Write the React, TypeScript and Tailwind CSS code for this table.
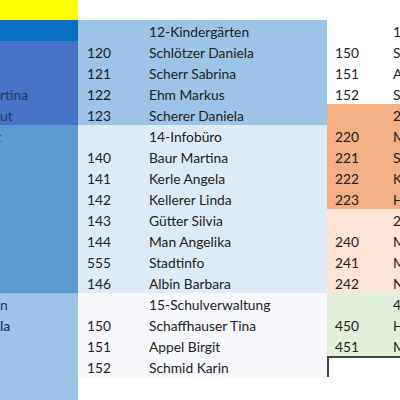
import * as React from "react";

type Row = {
  a?: string;
  aBg: string;
  b?: string;
  c?: string;
  bcBg: string;
  d?: string;
  e?: string;
  deBg: string;
  box?: boolean;
};

const Y = "bg-[#ffff00]";
const BLUE0 = "bg-[#0a6fc0]";
const BLUE1 = "bg-[#4673c6]";
const BLUE2 = "bg-[#5b9bd5]";
const BLUE3 = "bg-[#9dc3e6]";
const BLUE4 = "bg-[#ddebf7]";
const PALE = "bg-[#f6f8fc]";
const W = "bg-white";
const OR = "bg-[#f4b084]";
const PEACH = "bg-[#fce4d6]";
const GREEN = "bg-[#e2efda]";

const rows: Row[] = [
  { aBg: Y, bcBg: W, deBg: W },
  { aBg: BLUE0, c: "12-Kindergärten", bcBg: BLUE3, e: "13-Jugend", deBg: W },
  { aBg: BLUE1, b: "120", c: "Schlötzer Daniela", bcBg: BLUE3, d: "150", e: "Schaffhauser", deBg: W },
  { aBg: BLUE1, b: "121", c: "Scherr Sabrina", bcBg: BLUE3, d: "151", e: "Appel", deBg: W },
  { aBg: BLUE1, a: "rtina", b: "122", c: "Ehm Markus", bcBg: BLUE3, d: "152", e: "Schmid", deBg: W },
  { aBg: BLUE1, a: "ut", b: "123", c: "Scherer Daniela", bcBg: BLUE3, e: "22-Bauamt", deBg: OR },
  { aBg: BLUE2, a: "t", c: "14-Infobüro", bcBg: BLUE4, d: "220", e: "Maier", deBg: OR },
  { aBg: BLUE2, b: "140", c: "Baur Martina", bcBg: BLUE4, d: "221", e: "Schmid", deBg: OR },
  { aBg: BLUE2, b: "141", c: "Kerle Angela", bcBg: BLUE4, d: "222", e: "Kunz", deBg: OR },
  { aBg: BLUE2, b: "142", c: "Kellerer Linda", bcBg: BLUE4, d: "223", e: "Huber", deBg: OR },
  { aBg: BLUE2, b: "143", c: "Gütter Silvia", bcBg: BLUE4, e: "24-Ordnung", deBg: PEACH },
  { aBg: BLUE2, b: "144", c: "Man Angelika", bcBg: BLUE4, d: "240", e: "Maier", deBg: PEACH },
  { aBg: BLUE2, b: "555", c: "Stadtinfo", bcBg: BLUE4, d: "241", e: "Müller", deBg: PEACH },
  { aBg: BLUE2, b: "146", c: "Albin Barbara", bcBg: BLUE4, d: "242", e: "Neher", deBg: PEACH },
  { aBg: BLUE3, a: "n", c: "15-Schulverwaltung", bcBg: PALE, e: "45-Bauhof", deBg: GREEN },
  { aBg: BLUE3, a: "la", b: "150", c: "Schaffhauser Tina", bcBg: PALE, d: "450", e: "Hahn", deBg: GREEN },
  { aBg: BLUE3, b: "151", c: "Appel Birgit", bcBg: PALE, d: "451", e: "Mayer", deBg: GREEN },
  { aBg: BLUE3, b: "152", c: "Schmid Karin", bcBg: PALE, deBg: W, box: true },
  { aBg: BLUE3, bcBg: W, deBg: W },
  { aBg: BLUE3, bcBg: W, deBg: W },
];

export default function App() {
  return (
    <div
      className="w-[400px] h-[400px] overflow-hidden bg-white text-[13.8px] text-[#222]"
      style={{ fontFamily: "Lato, 'Open Sans', sans-serif" }}
    >
      {rows.map((r, i) => (
        <div key={i} className={`flex ${i === 0 ? "h-[20px]" : "h-[21px]"} leading-none`}>
          <div
            className={`w-[78px] shrink-0 flex items-center pt-[3px] overflow-hidden text-[#1f3864] ${r.aBg} ${
              r.a === "t" ? "-indent-[4px]" : ""
            } ${r.a === "la" ? "font-semibold" : ""}`}
          >
            {r.a}
          </div>
          <div className={`w-[249px] shrink-0 flex items-center pt-[3px] ${r.bcBg}`}>
            <div className="w-[71px] pl-[9px]">{r.b}</div>
            <div className="whitespace-nowrap">{r.c}</div>
          </div>
          <div
            className={`flex-1 flex items-center pt-[3px] whitespace-nowrap overflow-hidden ${r.deBg} ${
              r.box ? "border-t-2 border-l-2 border-[#444]" : ""
            }`}
          >
            <div className="w-[66px] shrink-0 pl-[8px]">{r.d}</div>
            <div>{r.e}</div>
          </div>
        </div>
      ))}
    </div>
  );
}
